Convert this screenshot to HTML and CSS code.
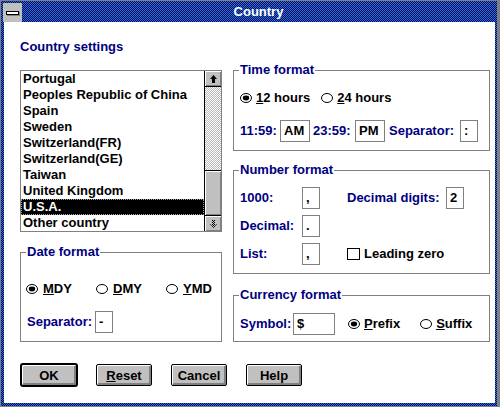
FILE: index.html
```html
<!DOCTYPE html>
<html>
<head>
<meta charset="utf-8">
<title>Country</title>
<link rel="stylesheet" href="styles.css">
</head>
<body>
<div class="window">
  <div class="titlebar">
    <div class="sysmenu"><span class="sysbar"></span></div>
    <div class="title">Country</div>
  </div>
  <div class="client">
    <div class="main">
      <div class="col-left">
        <div class="heading">Country settings</div>
        <div class="listbox">
          <ul class="items">
            <li>Portugal</li>
            <li>Peoples Republic of China</li>
            <li>Spain</li>
            <li>Sweden</li>
            <li>Switzerland(FR)</li>
            <li>Switzerland(GE)</li>
            <li>Taiwan</li>
            <li>United Kingdom</li>
            <li class="selected">U.S.A.</li>
            <li>Other country</li>
          </ul>
          <div class="scrollbar">
            <div class="sb-btn sb-up"><svg width="7" height="8" viewBox="0 0 7 8"><polygon points="3.5,0 7,4 5,4 5,8 2,8 2,4 0,4" fill="#000"/></svg></div>
            <div class="sb-track"></div>
            <div class="sb-thumb"></div>
            <div class="sb-btn sb-down"><svg width="7" height="8" viewBox="0 0 7 8"><defs><pattern id="dith" width="2" height="2" patternUnits="userSpaceOnUse"><rect x="0" y="0" width="1" height="1" fill="#000"/><rect x="1" y="1" width="1" height="1" fill="#000"/></pattern></defs><polygon points="2,0 5,0 5,4 7,4 3.5,8 0,4 2,4" fill="url(#dith)"/></svg></div>
          </div>
        </div>
        <fieldset class="group date">
          <legend>Date format</legend>
          <div class="date-radios">
            <div class="opt"><svg class="radio" width="12" height="10" viewBox="0 0 12 10"><ellipse cx="6" cy="5" rx="5.5" ry="4.5" fill="#fff" stroke="#000"/><ellipse cx="6" cy="5" rx="3.2" ry="2.4" fill="#000"/></svg><span><u>M</u>DY</span></div>
            <div class="opt"><svg class="radio" width="12" height="10" viewBox="0 0 12 10"><ellipse cx="6" cy="5" rx="5.5" ry="4.5" fill="#fff" stroke="#000"/></svg><span><u>D</u>MY</span></div>
            <div class="opt"><svg class="radio" width="12" height="10" viewBox="0 0 12 10"><ellipse cx="6" cy="5" rx="5.5" ry="4.5" fill="#fff" stroke="#000"/></svg><span><u>Y</u>MD</span></div>
          </div>
          <div class="row date-sep-row">
            <span class="lbl date-sep">Separator:</span><span class="edit w18">-</span>
          </div>
        </fieldset>
      </div>
      <div class="col-right">
        <fieldset class="group time">
          <legend>Time format</legend>
          <div class="row time-r1">
            <div class="opt"><svg class="radio" width="12" height="10" viewBox="0 0 12 10"><ellipse cx="6" cy="5" rx="5.5" ry="4.5" fill="#fff" stroke="#000"/><ellipse cx="6" cy="5" rx="3.2" ry="2.4" fill="#000"/></svg><span><u>1</u>2 hours</span></div>
            <div class="opt opt-24"><svg class="radio" width="12" height="10" viewBox="0 0 12 10"><ellipse cx="6" cy="5" rx="5.5" ry="4.5" fill="#fff" stroke="#000"/></svg><span><u>2</u>4 hours</span></div>
          </div>
          <div class="row time-r2">
            <span class="lbl t-am">11:59:</span><span class="edit w30">AM</span>
            <span class="lbl t-pm">23:59:</span><span class="edit w30">PM</span>
            <span class="lbl t-sep">Separator:</span><span class="edit w18">:</span>
          </div>
        </fieldset>
        <fieldset class="group number">
          <legend>Number format</legend>
          <div class="numgrid">
            <span class="lbl">1000:</span><span class="edit">,</span>
            <span></span>
            <span class="lbl">Decimal digits:</span><span class="edit">2</span>
            <span class="lbl">Decimal:</span><span class="edit">.</span>
            <span></span><span></span><span></span>
            <span class="lbl">List:</span><span class="edit">,</span>
            <span></span>
            <div class="check-item"><span class="checkbox"></span><span>Leading zero</span></div>
          </div>
        </fieldset>
        <fieldset class="group currency">
          <legend>Currency format</legend>
          <div class="row cur-row">
            <span class="lbl c-sym">Symbol:</span><span class="edit w42">$</span>
            <div class="opt c-prefix"><svg class="radio" width="12" height="10" viewBox="0 0 12 10"><ellipse cx="6" cy="5" rx="5.5" ry="4.5" fill="#fff" stroke="#000"/><ellipse cx="6" cy="5" rx="3.2" ry="2.4" fill="#000"/></svg><span><u>P</u>refix</span></div>
            <div class="opt c-suffix"><svg class="radio" width="12" height="10" viewBox="0 0 12 10"><ellipse cx="6" cy="5" rx="5.5" ry="4.5" fill="#fff" stroke="#000"/></svg><span><u>S</u>uffix</span></div>
          </div>
        </fieldset>
      </div>
    </div>
    <div class="buttons">
      <div class="btn default">OK</div>
      <div class="btn"><span><u>R</u>eset</span></div>
      <div class="btn">Cancel</div>
      <div class="btn">Help</div>
    </div>
  </div>
</div>
</body>
</html>
```

FILE: styles.css
```css
* { box-sizing: border-box; }

html, body {
  margin: 0;
  padding: 0;
}

body {
  width: 500px;
  height: 407px;
  overflow: hidden;
  font-family: "Liberation Sans", Arial, sans-serif;
  font-size: 13px;
  line-height: 16px;
  font-weight: bold;
  color: #000;
  background: #fff;
}

.window {
  width: 500px;
  height: 407px;
  border-style: solid;
  border-color: #808080;
  border-width: 1px 3px 1px 1px;
  padding: 0 2px 3px 3px;
  background: repeating-conic-gradient(#000080 0 25%, #2878b8 0 50%) 0 0 / 2px 2px;
  display: flex;
  flex-direction: column;
}

.titlebar {
  height: 21px;
  display: flex;
  flex-shrink: 0;
}

.sysmenu {
  width: 19px;
  height: 19px;
  margin: 2px 0 0 -1px;
  background: #c0c0c0;
  padding: 8px 0 0 3px;
}

.sysbar {
  display: block;
  width: 13px;
  height: 4px;
  border: 1px solid #000;
  background: #fff;
  box-shadow: 1px 1px #808080;
}

.title {
  flex: 1;
  text-align: center;
  color: #fff;
  padding-top: 3px;
}

.client {
  flex: 1;
  background: #fff;
  padding: 17px 5px 0 16px;
}

.main {
  display: grid;
  grid-template-columns: 202px 257px;
  column-gap: 11px;
  align-items: start;
}

.heading {
  color: #000080;
  height: 16px;
}

.listbox {
  margin-top: 15px;
  height: 162px;
  border: 1px solid #808080;
  display: flex;
}

.items {
  flex: 1;
  list-style: none;
  margin: 0;
  padding: 0;
  min-width: 0;
}

.items li {
  height: 16px;
  padding-left: 2px;
  white-space: nowrap;
}

.items li.selected {
  background: #000;
  color: #fff;
  outline: 1px dotted #a0a0a0;
  outline-offset: -1px;
}

.scrollbar {
  width: 17px;
  border-left: 1px solid #000;
  display: flex;
  flex-direction: column;
}

.sb-btn {
  background: #c0c0c0;
  box-shadow: inset 1px 1px #fff, inset -1px -1px #808080;
  display: flex;
  align-items: center;
  justify-content: center;
}

.sb-up {
  height: 16px;
  border-bottom: 1px solid #000;
}

.sb-down {
  height: 15px;
}

.sb-track {
  flex: 1;
  background: repeating-conic-gradient(#b8b8b8 0 25%, #fff 0 50%) 0 0 / 2px 2px;
}

.sb-thumb {
  height: 46px;
  border-top: 1px solid #000;
  border-bottom: 1px solid #000;
  background: #c0c0c0;
  box-shadow: inset 1px 1px #fff, inset -1px -1px #808080;
}

.group {
  margin: 0;
  min-width: 0;
  border: 1px solid #808080;
}

.group legend {
  padding: 0 1px;
  margin-left: -1px;
  color: #000080;
  line-height: 16px;
}

.lbl {
  color: #000080;
  white-space: nowrap;
}

.row {
  display: flex;
  align-items: center;
}

.edit {
  display: block;
  height: 22px;
  border: 1px solid #808080;
  background: #fff;
  padding-left: 3px;
  line-height: 20px;
  color: #000;
}

.w18 { width: 18px; }
.w30 { width: 30px; }
.w42 { width: 42px; }

.opt {
  display: flex;
  align-items: center;
  white-space: nowrap;
}

.radio {
  display: block;
  margin-right: 4px;
  flex-shrink: 0;
}

/* Date format */
.date {
  margin-top: 12px;
  padding: 21px 5px 8px 6px;
}

.date-radios {
  display: grid;
  grid-template-columns: 70px 70px auto;
  height: 16px;
  margin-left: -1px;
}

.date-radios .radio {
  margin-right: 5px;
}

.date-sep-row {
  height: 22px;
  margin-top: 14px;
}

.date-sep {
  width: 68px;
}

/* Time format */
.time {
  margin-top: 23px;
  padding: 12px 5px 8px 6px;
}

.time-r1 {
  height: 16px;
}

.opt-24 {
  margin-left: 11px;
}

.time-r2 {
  height: 22px;
  margin-top: 14px;
}

.t-am { width: 40px; }
.t-pm { width: 42px; margin-left: 3px; }
.t-sep { width: 71px; margin-left: 4px; }

/* Number format */
.number {
  margin-top: 11px;
  padding: 9px 5px 8px 6px;
}

.numgrid {
  display: grid;
  grid-template-columns: 62px 18px 27px 99px 18px;
  grid-auto-rows: 22px;
  row-gap: 6px;
  align-items: center;
}

.check-item {
  grid-column: 4 / 6;
  display: flex;
  align-items: center;
  white-space: nowrap;
}

.checkbox {
  display: block;
  width: 13px;
  height: 12px;
  border: 1px solid #000;
  background: #fff;
  margin-right: 4px;
}

/* Currency format */
.currency {
  margin-top: 13px;
  padding: 10px 5px 6px 6px;
}

.cur-row {
  height: 22px;
}

.c-sym { width: 53px; }
.c-prefix { margin-left: 13px; }
.c-suffix { margin-left: 20px; }

/* Buttons */
.buttons {
  display: flex;
  gap: 19px;
  margin-top: 22px;
  padding-left: 1px;
}

.btn {
  width: 56px;
  height: 22px;
  border: 1px solid #000;
  border-radius: 2px;
  background: #c0c0c0;
  box-shadow: inset 1px 1px #fff, inset -2px -2px #808080;
  display: flex;
  align-items: center;
  justify-content: center;
  padding-top: 1px;
}

.btn.default {
  box-shadow: 0 0 0 1px #000, inset 1px 1px #fff, inset -2px -2px #808080;
}
```
